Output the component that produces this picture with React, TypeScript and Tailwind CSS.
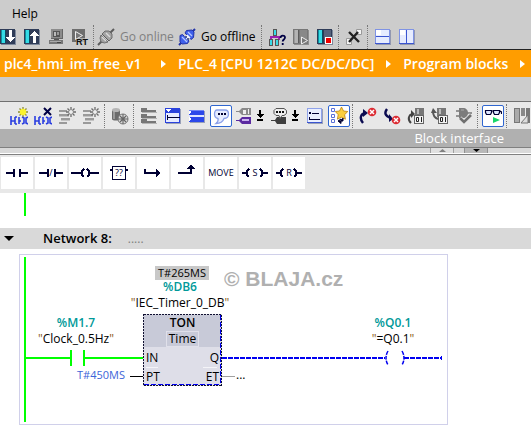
import type { ReactNode } from "react"
import clsx from "clsx"

const NAVY = "#000033"

function Icon({ children, soft = false }: { children: ReactNode; soft?: boolean }) {
  return (
    <svg
      width="18"
      height="18"
      viewBox="0 0 18 18"
      className="shrink-0"
      shapeRendering={soft ? "auto" : "crispEdges"}
      aria-hidden="true"
    >
      {children}
    </svg>
  )
}

/* ---------- main toolbar icons ---------- */

function DeviceIcon({ dir, gray = false, badge }: { dir?: "down" | "up"; gray?: boolean; badge?: "play" | "stop" }) {
  return (
    <Icon>
      <rect x="2" y="2" width="15" height="15" fill={gray ? "#8f8f8f" : "#7f8a9c"} />
      <rect x="1" y="1" width="15" height="15" fill={gray ? "#777777" : "#2f3c58"} />
      <rect x="2" y="2" width="4" height="13" fill={gray ? "#b4b4b4" : "#35dbe6"} />
      <rect x="2" y="2" width="1" height="13" fill={gray ? "#9a9a9a" : "#0d8f9c"} />
      <rect x="6" y="2" width="1" height="13" fill={gray ? "#5c5c5c" : "#0b4a60"} />
      {badge && <rect x="8" y="2" width="7" height="13" fill={gray ? "#888888" : "#56637c"} />}
      {dir === "down" && <path d="M10 2h3v7h3v1h-1v1h-1v1h-1v1h-1v1h-1v-1h-1v-1H9v-1H8v-1H7V9h3z" fill="#fff" />}
      {dir === "up" && <path d="M10 15h3V8h3V7h-1V6h-1V5h-1V4h-1V3h-1v1h-1v1H9v1H8v1H7v1h3z" fill="#fff" />}
      {badge === "play" && <path d="M9.500 9v7l6-3.500z" fill="#777" stroke="#eee" strokeWidth="1" shapeRendering="auto" />}
      {badge === "stop" && (
        <>
          <rect x="9" y="9" width="7" height="7" fill="#fff" />
          <rect x="10" y="10" width="5" height="5" fill="#f00000" />
        </>
      )}
    </Icon>
  )
}

function ComputerIcon() {
  return (
    <Icon>
      <rect x="4" y="1" width="12" height="10" fill="#666" />
      <rect x="4" y="1" width="11" height="9" fill="#8c8c8c" />
      <rect x="6" y="3" width="7" height="6" fill="#555" />
      <rect x="7" y="4" width="2" height="4" fill="#bbb" />
      <rect x="10" y="4" width="2" height="3" fill="#999" />
      <rect x="7" y="11" width="5" height="1" fill="#555" />
      <rect x="2" y="12" width="14" height="4" fill="#777" />
      <rect x="3" y="13" width="11" height="1" fill="#aaa" />
      <rect x="10" y="14" width="4" height="1" fill="#444" />
    </Icon>
  )
}

function RuntimeIcon() {
  return (
    <Icon soft>
      <rect x="1" y="1" width="13" height="13" fill="#6e6e6e" />
      <path d="M4.500 3.500v8l7-4z" fill="#777" stroke="#eee" />
      <rect x="5" y="10" width="12" height="8" fill="#cccccc" opacity="0.7" />
      <text x="5" y="17" fontSize="9" fontWeight="700" fontFamily="Liberation Sans, sans-serif" fill="#111">
        RT
      </text>
    </Icon>
  )
}

function PlugIcon({ active = false }: { active?: boolean }) {
  const dark = active ? "#2233a8" : "#5c5c5c"
  const fill = active ? "#3f60ea" : "#a2a2a2"
  const light = active ? "#b4c6ff" : "#dadada"
  return active ? (
    <Icon soft>
      <path d="M1 17l3-3M14 4l3-3" stroke={dark} strokeWidth="2" />
      <path d="M2 7.500l2.500-1 6.500 6.500-1.500 2.500-5.500.5L2 14z" fill={fill} stroke={dark} />
      <path d="M7 5l1.500-2.500L14 2l2 2-.5 5.500-2.500 2z" fill={fill} stroke={dark} />
      <path d="M6.500 8.500l3-2 3 3-3 3z" fill="#eef2ff" />
      <path d="M7 9h2M9 11h2" stroke="#20307c" strokeWidth="1.400" />
      <path d="M4 9l5 5M10 4l4 4" stroke={light} strokeWidth="1.300" />
    </Icon>
  ) : (
    <Icon soft>
      <path d="M1 17l4-4M13 5l4-4" stroke={dark} strokeWidth="2" />
      <path d="M4 7l7 7-3.500 1L4 14 3 10z" fill={fill} stroke={dark} strokeWidth="0.800" />
      <path d="M5 6l3-3h4l3 3v4l-3 3z" fill={fill} stroke={dark} strokeWidth="0.800" />
      <path d="M5 9l4 4M9 5l4 4" stroke={light} strokeWidth="1.400" />
      <path d="M5 6l7 7" stroke={dark} strokeWidth="1" />
    </Icon>
  )
}

function AccessibleIcon() {
  return (
    <Icon soft>
      <rect x="5" y="1" width="4" height="7" fill="#555" />
      <rect x="6" y="2" width="2" height="5" fill="#38dce8" />
      <path d="M3 12V9h8v3" fill="none" stroke="#9a20b0" strokeWidth="2" />
      <rect x="1" y="11" width="4" height="7" fill="#555" />
      <rect x="2" y="12" width="2" height="5" fill="#38dce8" />
      <rect x="7" y="11" width="4" height="7" fill="#555" />
      <rect x="8" y="12" width="2" height="5" fill="#38dce8" />
      <path d="M12.500 10c0-3 4.500-3 4.500-.5 0 2-2.300 2-2.300 4M14.700 15v2" fill="none" stroke="#000044" strokeWidth="1.800" />
    </Icon>
  )
}

function CrossIcon() {
  return (
    <Icon soft>
      <path d="M11.500 1.500h5v5h-5zM1.500 10.500h5v6h-5z" fill="#f4f4f4" stroke="#999" />
      <path d="M4 4l10 10M13 4L4 14" stroke="#222" strokeWidth="2.400" />
    </Icon>
  )
}

function SplitIcon({ vertical = false }: { vertical?: boolean }) {
  return (
    <Icon>
      <rect x="2" y="2" width="15" height="15" fill="#9298b0" />
      <rect x="1" y="1" width="15" height="15" fill="#7f93e4" />
      <rect x="2" y="2" width="13" height="13" fill="#e6ecff" />
      <rect x="2" y="2" width="5" height="5" fill="#fff" />
      <rect x="1" y="15" width="15" height="1" fill="#3b55d0" />
      {vertical ? (
        <rect x="8" y="2" width="1" height="13" fill="#3b55d0" />
      ) : (
        <rect x="2" y="8" width="13" height="1" fill="#3b55d0" />
      )}
    </Icon>
  )
}

/* ---------- editor toolbar icons ---------- */

function Rung() {
  return (
    <path
      d="M1 9v9M1 14h4M5 10v7M5 10h2M5 17h2M9 10v7M9 14h2M12 10l2 1v5l-2 1M18 10l-2 1v5l2 1"
      fill="none"
      stroke="#2a3ee0"
      strokeWidth="1.600"
    />
  )
}

function Burst({ color }: { color: string }) {
  return <path d="M13 0v10M8 5h10M9.500 1.500l7 7M16.500 1.500l-7 7" stroke={color} strokeWidth="1.300" />
}

function InsertNetworkIcon() {
  return (
    <Icon soft>
      <Rung />
      <Burst color="#8a8a30" />
      <circle cx="13" cy="5" r="3.200" fill="#fbf32c" />
    </Icon>
  )
}

function DeleteNetworkIcon() {
  return (
    <Icon soft>
      <Rung />
      <rect x="9" y="0" width="9" height="9" fill="#e8e8e8" />
      <path d="M10 1l7 7M17 1l-7 7" stroke="#000044" strokeWidth="2" />
    </Icon>
  )
}

function InsertRowIcon() {
  return (
    <Icon soft>
      <path d="M1 4h8M1 8h10M3 12h9M1 16h8" stroke="#9a9a9a" strokeWidth="2" />
      <path d="M3 13.500h9M1 9.500h10" stroke="#c4c4c4" />
      <Burst color="#6c6c6c" />
      <circle cx="13" cy="5" r="2" fill="#eee" />
    </Icon>
  )
}

function CylinderIcon() {
  return (
    <Icon soft>
      <path d="M1 3v9c0 2 8 2 8 0V3z" fill="#6b6b6b" />
      <path d="M2 4v8h2V4z" fill="#999" />
      <ellipse cx="5" cy="3" rx="4" ry="2" fill="#b5b5b5" />
      <circle cx="12" cy="12" r="5" fill="#d8d8d8" stroke="#777" />
      <path d="M12 7v10M7 12h10M9 9l6 6M15 9l-6 6" stroke="#666" strokeWidth="1.100" />
    </Icon>
  )
}

function NetworksIcon() {
  return (
    <Icon>
      {[1, 7, 12].map((y) => (
        <g key={y}>
          <path d={`M1 ${y}h6v2h9v2H1z`} fill="#777" />
          <rect x="2" y={y + 4} width="15" height="1" fill="#b4b4b4" />
        </g>
      ))}
    </Icon>
  )
}

function OpenNetworkIcon() {
  return (
    <Icon>
      <rect x="2" y="2" width="15" height="15" fill="#98a0b8" />
      <rect x="1" y="1" width="15" height="15" fill="#2a42dc" />
      <rect x="2" y="6" width="13" height="9" fill="#e6eaff" />
      <path d="M2 2h5v1H6v1H5v1H4V4H3V3H2z" fill="#fff" />
      <rect x="3" y="10" width="13" height="1" fill={NAVY} />
      <rect x="3" y="8" width="1" height="5" fill={NAVY} />
    </Icon>
  )
}

function CloseNetworkIcon() {
  return (
    <Icon>
      <rect x="2" y="4" width="15" height="12" fill="#98a0b8" />
      <rect x="1" y="3" width="15" height="12" fill="#2b48ea" />
      <rect x="1" y="8" width="15" height="2" fill="#dfe5ff" />
      <path d="M1 3l3 2-3 2zM1 10l3 2-3 2z" fill="#fff" />
      <rect x="1" y="3" width="15" height="1" fill="#6f84f4" />
    </Icon>
  )
}

function CommentIcon() {
  return (
    <Icon soft>
      <path
        d="M5 3h8c2 0 3.500 1.600 3.500 4S15 11.500 12 11.500c-1 3-4 5-8 5 2-1.500 2.500-3 2-5C3.500 11 2.500 9.500 2.500 7S3.500 3 5 3z"
        fill="#e6ecff"
        stroke="#8ba0ea"
        strokeWidth="1.300"
      />
      <path d="M6 6h2v2H6zM9 6h2v2H9zM12 6h2v2h-2z" fill={NAVY} />
    </Icon>
  )
}

function TagIcon({ comment = false }: { comment?: boolean }) {
  return (
    <Icon soft>
      {comment ? (
        <>
          <path d="M1 13h4l2-3h9v7H7l-2-3H1z" fill="#3e3e3e" />
          <path d="M6 1.500h8l2.500 2v3l-2.500 2h-2l-2 3-1-3H6l-2-2v-3z" fill="#eee" stroke="#555" />
          <path d="M6 4h2v2H6zM9 4h2v2H9zM12 4h2v2h-2z" fill="#111" />
        </>
      ) : (
        <>
          <path d="M1 4h3l3-3h9v7H7L4 5H1z" fill="#8a8a8a" />
          <path d="M8 3h3v4H8zM13 2h1v5h-1z" fill="#eee" />
          <path d="M1 13h3l3-3h9v7H7l-3-3H1z" fill="#5b2aa0" />
          <path d="M7 12h7v2H7z" fill="#c9b2ee" />
        </>
      )}
    </Icon>
  )
}

function DropIcon() {
  return (
    <svg width="8" height="12" viewBox="0 0 8 12" shapeRendering="crispEdges" aria-hidden="true">
      <path d="M3 0h2v4h3L4 8 0 4h3zM1 9h6v2H1z" fill="#000" />
    </svg>
  )
}

function ListIcon() {
  return (
    <Icon>
      <rect x="2" y="2" width="15" height="15" fill="#98a0b8" />
      <rect x="1" y="1" width="15" height="15" fill="#8fa2ea" />
      <rect x="2" y="2" width="13" height="13" fill="#eaefff" />
      <path d="M3 5h2v2H3zM6 6h7v1H6zM4 12h10v1H4zM3 10h1v3H3z" fill={NAVY} />
      <rect x="1" y="15" width="15" height="1" fill="#3b55d0" />
    </Icon>
  )
}

function FavoritesIcon() {
  return (
    <Icon soft>
      <path d="M1.500 1.500h3v3h-3zM1.500 7.500h3v3h-3zM1.500 12.500h3v3h-3z" fill="#fff" stroke="#5a70d8" />
      <path
        d="M11.500 0l2 4 4.300.5-3.200 3.200.8 4.500-4-2-4 2 .8-4.500L5.300 4.500l4.200-.5z"
        fill="#fccf3e"
        stroke="#b98212"
        strokeWidth="0.800"
      />
      <path d="M13 11v3H9M11 12l-3 2 3 2.500z" fill={NAVY} stroke={NAVY} strokeWidth="1" />
    </Icon>
  )
}

function ErrorIcon({ next = false }: { next?: boolean }) {
  const cy = next ? 13 : 5
  return (
    <Icon soft>
      {next ? (
        <path d="M4 2C1 6 2 9 8 11" fill="none" stroke="#0b0b50" strokeWidth="2.400" />
      ) : (
        <path d="M4 16C0 11 2 7 6 6" fill="none" stroke="#0b0b50" strokeWidth="2.400" />
      )}
      <path d={next ? "M6 7v8l4-3z" : "M4 2v8l5-4z"} fill="#0b0b50" />
      <circle cx="13" cy={cy} r="4.300" fill="#dc2d34" />
      <path d={`M11 ${cy - 2}l4 4M15 ${cy - 2}l-4 4`} stroke="#fff" strokeWidth="1.500" />
    </Icon>
  )
}

function CallIcon({ back = false }: { back?: boolean }) {
  return (
    <Icon soft>
      <rect x={back ? 6 : 8} y="1" width="9" height="9" fill="#777" />
      <rect x={back ? 8 : 10} y="2" width="2" height="5" fill="#bbb" />
      <rect x="7.500" y="8.500" width="9" height="8" fill="#f2f2f2" stroke="#666" />
      <path d="M9.500 10.500h2v4h-2zM14.500 10v5" fill="none" stroke="#222" />
      {back ? (
        <>
          <path d="M2 4c0 5 2 7 5 8" fill="none" stroke="#555" strokeWidth="2" />
          <path d="M2 1l-2 5h6z" fill="#555" />
        </>
      ) : (
        <>
          <path d="M4 16C0 12 2 8 5 7" fill="none" stroke="#444" strokeWidth="2" />
          <path d="M4 3v8l4-4z" fill="#444" />
        </>
      )}
    </Icon>
  )
}

function ConsistencyIcon() {
  return (
    <Icon soft>
      <path d="M1 4h3M1 9h3M12 6h5" stroke="#777" strokeWidth="1.600" />
      <path d="M4 1h4c3 0 5 2 5 5s-2 5-5 5H4z" fill="#7c7c7c" />
      <path d="M6 3h3" stroke="#aaa" />
      <path d="M5 11l4 4 7-7" fill="none" stroke="#e8e8e8" strokeWidth="4" />
      <path d="M5 11l4 4 7-7" fill="none" stroke="#707070" strokeWidth="2.600" />
    </Icon>
  )
}

function MonitorIcon() {
  return (
    <Icon soft>
      <path d="M1.500 3.500h6v2l-1 2h-4l-1-2zM9.500 3.500h6v2l-1 2h-4l-1-2zM7 4h3M16 4l1.500 1v2" fill="#dde6ff" stroke={NAVY} strokeWidth="1.200" />
      <path d="M9 10v6l7-3z" fill="#18d868" />
    </Icon>
  )
}

function BlocksIcon() {
  return (
    <Icon soft>
      <rect x="1.500" y="1.500" width="5" height="14" fill="#aaa" stroke="#777" />
      <rect x="8" y="1" width="4" height="8" fill="#888" />
      <rect x="13" y="1" width="4" height="15" fill="#777" />
      <path d="M8 16l7-8v8z" fill="#ddd" stroke="#777" />
    </Icon>
  )
}

/* ---------- building blocks ---------- */

function Separator() {
  return <div className="ml-px mr-[3px] h-6 shrink-0 border-l border-dotted border-[#777777]" />
}

function ToolButton({ label, active = false, children }: { label: string; active?: boolean; children: ReactNode }) {
  return (
    <button type="button" aria-label={label} className="flex h-6 w-6 shrink-0 items-center justify-center">
      <span
        className={clsx(
          "flex h-[22px] w-[22px] items-center justify-center",
          active && "rounded-[2px] border border-[#2f66d0] bg-white"
        )}
      >
        {children}
      </span>
    </button>
  )
}

function DropButton({ label, children }: { label: string; children: ReactNode }) {
  return (
    <button type="button" aria-label={label} className="flex h-6 w-[35px] shrink-0 items-center gap-[3px] pl-0.5">
      {children}
      <DropIcon />
    </button>
  )
}

function CrumbArrow() {
  return (
    <svg width="5" height="8" viewBox="0 0 5 8" className="mx-3 shrink-0" aria-hidden="true">
      <path d="M0 0l5 4-5 4z" fill="#fff" />
    </svg>
  )
}

const crumbs = ["plc4_hmi_im_free_v1", "PLC_4 [CPU 1212C DC/DC/DC]", "Program blocks"]

const favorites = [
  { name: "Normally open contact", path: "M5 16h8M13 12v8M19 12v8M19 16h8" },
  { name: "Normally closed contact", path: "M4 16h8M13 12v8M20 12v8M20 16h8", mark: "/" },
  { name: "Coil", path: "M2 16h11M15 12l-2 2v4l2 2M18 12l2 2v4l-2 2M20 16h10" },
  { name: "Empty box", path: "M7 13h2M23 13h2", mark: "??", box: true },
  { name: "Open branch", path: "M8 12v5M7 16h12", head: "M19 12h1v1h1v1h1v1h1v2h-1v1h-1v1h-1v1h-1z" },
  { name: "Close branch", path: "M7 16h14M20 16v-6", head: "M16 12v-1h1v-1h1V9h1V8h2v1h1v1h1v1h1v1z" },
  { name: "MOVE", path: "", mark: "MOVE" },
  { name: "Set output", path: "M3 16h5M10 12l-2 2v4l2 2M21 12l2 2v4l-2 2M23 16h6", mark: "S" },
  { name: "Reset output", path: "M3 16h5M10 12l-2 2v4l2 2M21 12l2 2v4l-2 2M23 16h6", mark: "R" },
]

function FavoriteButton({ item }: { item: (typeof favorites)[number] }) {
  return (
    <button type="button" aria-label={item.name} className="h-8 w-8 shrink-0 bg-white">
      <svg width="32" height="32" viewBox="0 0 32 32" aria-hidden="true">
        <path d={item.path} fill="none" stroke={NAVY} strokeWidth="2" shapeRendering="crispEdges" />
        {item.head && <path d={item.head} fill={NAVY} shapeRendering="crispEdges" />}
        {item.box && <rect x="9.500" y="9.500" width="13" height="13" fill="#fff" stroke={NAVY} />}
        {item.mark && (
          <text x="16" y="19" textAnchor="middle" fontSize="9" fontFamily="Open Sans, sans-serif" fontWeight="500" fill={NAVY}>
            {item.mark}
          </text>
        )}
      </svg>
    </button>
  )
}

function Wires() {
  return (
    <svg width="427" height="169" viewBox="20 255 427 169" shapeRendering="crispEdges" aria-hidden="true">
      <g stroke="#00ff00" strokeWidth="2" fill="none">
        <path d="M25 257v165M26 358h45M71 350v16M84 350v16M84 358h59" />
      </g>
      <path d="M130 376.500h13" stroke="#000" />
      <path d="M222 376.500h13" stroke="#a0a0a0" />
      <path d="M222 358h163M404 358h37" stroke="#0000f0" strokeWidth="2" strokeDasharray="5 1" />
      <path d="M441.500 356v4" stroke="#0000f0" />
      <path d="M388 351q-4 7 0 14M402 351q4 7 0 14" fill="none" stroke="#0000f0" strokeWidth="1.500" strokeDasharray="4 1" shapeRendering="auto" />
    </svg>
  )
}

function TimerBlock() {
  return (
    <div className="absolute left-[123px] top-[59px] h-[72px] w-[79px] bg-[#dedee8] p-px">
      <div className="flex h-8 flex-col items-center bg-[#c8cad8]">
        <span className="h-4 font-semibold leading-4">TON</span>
        <span className="h-4 border border-[#e0e0ea] px-0.5 leading-[14px]">Time</span>
      </div>
      <div className="flex h-[22px] items-center justify-between px-0.5">
        <span>IN</span>
        <span>Q</span>
      </div>
      <div className="flex h-4 items-center justify-between px-0.5">
        <span>PT</span>
        <span>ET</span>
      </div>
      <svg width="79" height="72" viewBox="0 0 79 72" className="absolute inset-0" shapeRendering="crispEdges" aria-hidden="true">
        <path d="M3 53.500h12M60 53.500h14" stroke="#f4f4f8" />
        <rect x="0.500" y="0.500" width="78" height="71" fill="none" stroke="#101030" strokeDasharray="2 1" />
        <path d="M77.500 1v69M1 70.500h77" stroke="#0000f0" strokeDasharray="5 2" />
      </svg>
    </div>
  )
}

function Operand({ address, name, className }: { address: string; name: string; className: string }) {
  return (
    <div className={clsx("absolute flex flex-col items-center whitespace-nowrap leading-4", className)}>
      <span className="font-semibold text-[#009999]">{address}</span>
      <span>
        <span className="text-[#8a5a20]">"</span>
        {name}
        <span className="text-[#8a5a20]">"</span>
      </span>
    </div>
  )
}

export default function App() {
  return (
    <div className="min-h-screen overflow-hidden bg-white font-['Open_Sans','Noto_Sans',sans-serif] text-xs text-black">
      <header className="bg-[#cccccc]">
        <nav className="flex h-6 items-center px-3 pt-1">
          <button type="button">Help</button>
        </nav>
        <div className="-ml-1 flex h-[25px] items-center">
          <ToolButton label="Download to device"><DeviceIcon dir="down" /></ToolButton>
          <ToolButton label="Upload from device"><DeviceIcon dir="up" /></ToolButton>
          <ToolButton label="Start simulation"><ComputerIcon /></ToolButton>
          <ToolButton label="Start runtime"><RuntimeIcon /></ToolButton>
          <Separator />
          <button type="button" disabled className="flex h-6 w-[81px] shrink-0 items-center gap-[5px] whitespace-nowrap text-[#808080]">
            <PlugIcon />
            Go online
          </button>
          <button type="button" className="flex h-6 w-[82px] shrink-0 items-center gap-[5px] whitespace-nowrap">
            <PlugIcon active />
            Go offline
          </button>
          <Separator />
          <ToolButton label="Accessible devices"><AccessibleIcon /></ToolButton>
          <ToolButton label="Start CPU"><DeviceIcon gray badge="play" /></ToolButton>
          <ToolButton label="Stop CPU"><DeviceIcon badge="stop" /></ToolButton>
          <Separator />
          <ToolButton label="Cross-references"><CrossIcon /></ToolButton>
          <Separator />
          <ToolButton label="Split editor horizontally"><SplitIcon /></ToolButton>
          <ToolButton label="Split editor vertically"><SplitIcon vertical /></ToolButton>
        </div>
      </header>

      <nav className="flex h-7 items-center whitespace-nowrap border-t border-[#222222] bg-[#ff9d00] pl-1 text-sm font-semibold text-white">
        {crumbs.map((crumb) => (
          <div key={crumb} className="flex items-center justify-between first:min-w-[174px]">
            <a href="#">{crumb}</a>
            <CrumbArrow />
          </div>
        ))}
      </nav>
      <div className="h-6 bg-[#cccccc]" />

      <div className="flex h-7 items-center border-t border-[#707070] bg-[#e8e8e8] pl-[7px]">
        <ToolButton label="Insert network"><InsertNetworkIcon /></ToolButton>
        <ToolButton label="Delete network"><DeleteNetworkIcon /></ToolButton>
        <ToolButton label="Insert row"><InsertRowIcon /></ToolButton>
        <ToolButton label="Add row"><InsertRowIcon /></ToolButton>
        <Separator />
        <ToolButton label="Reset start values"><CylinderIcon /></ToolButton>
        <Separator />
        <ToolButton label="Show networks"><NetworksIcon /></ToolButton>
        <ToolButton label="Open all networks"><OpenNetworkIcon /></ToolButton>
        <ToolButton label="Close all networks"><CloseNetworkIcon /></ToolButton>
        <ToolButton label="Network comments" active><CommentIcon /></ToolButton>
        <DropButton label="Absolute/symbolic operands"><TagIcon /></DropButton>
        <DropButton label="Tag information"><TagIcon comment /></DropButton>
        <ToolButton label="Operand list"><ListIcon /></ToolButton>
        <ToolButton label="Favorites" active><FavoritesIcon /></ToolButton>
        <Separator />
        <ToolButton label="Previous error"><ErrorIcon /></ToolButton>
        <ToolButton label="Next error"><ErrorIcon next /></ToolButton>
        <ToolButton label="Update block calls"><CallIcon /></ToolButton>
        <ToolButton label="Return from call"><CallIcon back /></ToolButton>
        <ToolButton label="Check consistency"><ConsistencyIcon /></ToolButton>
        <Separator />
        <ToolButton label="Monitoring on/off" active><MonitorIcon /></ToolButton>
        <Separator />
        <ToolButton label="Block properties"><BlocksIcon /></ToolButton>
      </div>

      <div className="flex h-[19px] items-center justify-end border-b border-[#808080] bg-[#b0b0b0] pr-[27px] pt-0.5 text-[13px] font-medium text-white">
        Block interface
      </div>
      <div className="flex h-1.5 justify-end gap-2.5 border-b border-white bg-[#d9d9d9] pr-[43px]">
        <button type="button" aria-label="Collapse interface" className="flex w-6 items-center justify-center border-x border-[#a0a0a0] bg-[#e0e0e0]">
          <svg width="7" height="3" viewBox="0 0 7 3" aria-hidden="true"><path d="M0 3l3.500-3L7 3z" fill="#808080" /></svg>
        </button>
        <button type="button" aria-label="Expand interface" className="flex w-6 items-center justify-center border-x border-[#909090] bg-[#b8b8b8]">
          <svg width="7" height="3" viewBox="0 0 7 3" aria-hidden="true"><path d="M0 0h7L3.500 3z" fill="#000" /></svg>
        </button>
      </div>

      <div className="flex gap-0.5 border-t border-[#808080] bg-[#e8e8e8] pb-1 pl-px pt-0.5">
        {favorites.map((item) => (
          <FavoriteButton key={item.name} item={item} />
        ))}
      </div>

      <main>
        <div className="h-[35px] pl-6">
          <div className="h-[23px] w-0.5 bg-[#00ff00]" />
        </div>
        <h2 className="flex h-[21px] items-center bg-[#d9d9d9] pl-1">
          <svg width="10" height="5" viewBox="0 0 10 5" aria-hidden="true"><path d="M0 0h10L5 5z" fill="#000" /></svg>
          <span className="ml-[29px] text-[13px] font-semibold">Network 8:</span>
          <span className="ml-4 text-[#808080]">.....</span>
        </h2>
        <section className="relative ml-[19px] mt-[5px] h-[171px] w-[429px] border border-[#d0d0ea]">
          <Wires />
          <div className="absolute left-[204px] top-3 whitespace-nowrap font-['Liberation_Sans',sans-serif] text-[21px] font-bold leading-6 text-[#b0b0b0]">
            © BLAJA.cz
          </div>
          <span className="absolute left-[135px] top-[11px] flex h-3.5 w-[54px] items-center justify-center bg-[#c8c8c8] text-[11px]">
            T#265MS
          </span>
          <Operand address="%DB6" name="IEC_Timer_0_DB" className="left-[110px] top-6 w-[100px]" />
          <Operand address="%M1.7" name="Clock_0.5Hz" className="left-[16px] top-[60px] w-20" />
          <Operand address="%Q0.1" name="=Q0.1" className="left-[343px] top-[60px] w-[60px]" />
          <span className="absolute left-[57px] top-[112px] text-[11px] leading-4 text-[#3c64d8]">T#450MS</span>
          <TimerBlock />
          <span className="absolute left-[216px] top-[112px] leading-4">...</span>
        </section>
      </main>
    </div>
  )
}
